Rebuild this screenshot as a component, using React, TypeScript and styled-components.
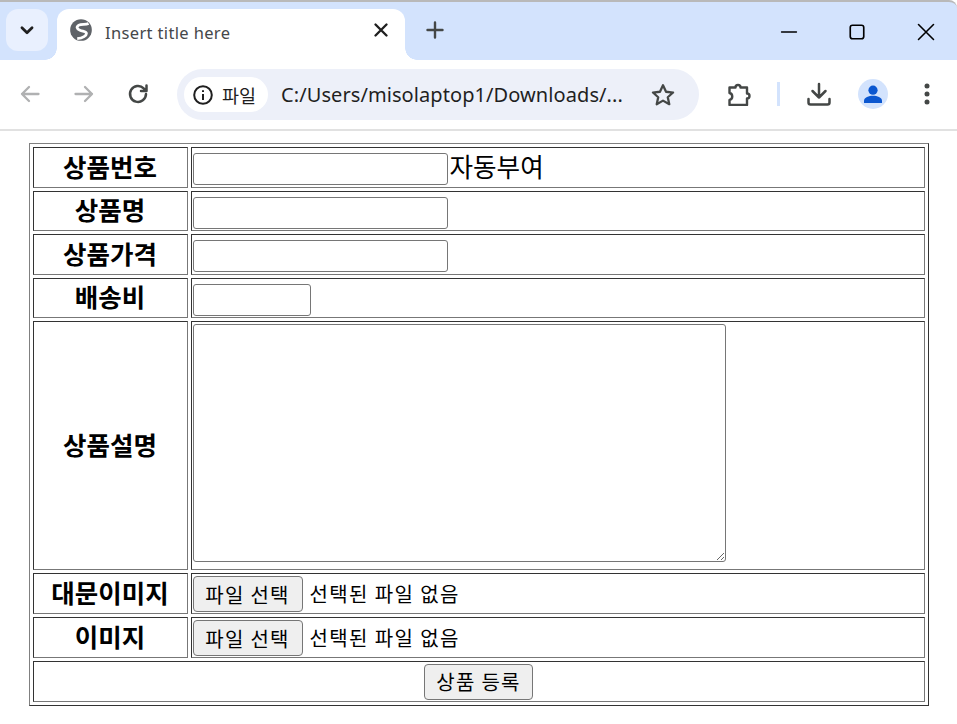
import React from "react";
import styled, { createGlobalStyle } from "styled-components";

const GlobalStyle = createGlobalStyle`
  body {
    margin: 0;
    background: #fff;
    font-family: "Noto Sans CJK KR", "Noto Sans", sans-serif;
  }
`;

const TitleBar = styled.div`
  height: 60px;
  border-top: 2px solid #b9b9b9;
  border-top-right-radius: 8px;
  background: #d3e3fd;
  display: flex;
  align-items: flex-start;
  padding: 7px 0 0 6px;
  box-sizing: border-box;
`;

const TabSearch = styled.div`
  width: 42px;
  height: 42px;
  border-radius: 12px;
  background: #e9f0fe;
  display: flex;
  align-items: center;
  justify-content: center;
`;

const Tab = styled.div`
  position: relative;
  width: 348px;
  height: 51px;
  margin-left: 9px;
  padding: 0 13px 9px 11px;
  box-sizing: border-box;
  background: #fff;
  border-radius: 12px 12px 0 0;
  display: flex;
  align-items: center;
  &::before,
  &::after {
    content: "";
    position: absolute;
    bottom: 0;
    width: 12px;
    height: 12px;
    background: radial-gradient(circle at var(--cx) 0, #d3e3fd 11.5px, #fff 12px);
  }
  &::before {
    left: -12px;
    --cx: 0;
  }
  &::after {
    right: -12px;
    --cx: 100%;
  }
`;

const TabTitle = styled.span`
  flex: 1;
  margin-left: 11px;
  padding-top: 5px;
  font-family: "Noto Sans", sans-serif;
  font-size: 16.5px;
  letter-spacing: 0.35px;
  color: #45474a;
`;

const NewTab = styled.div`
  margin: 9px 0 0 18px;
  display: flex;
`;

const WindowControls = styled.div`
  margin-left: auto;
  display: flex;
  align-items: center;
  height: 42px;
  margin-top: 2px;
  padding-right: 21px;
  gap: 50px;
`;

const Toolbar = styled.div`
  height: 71px;
  box-sizing: border-box;
  background: #fff;
  border-bottom: 2px solid #e1e1e1;
  border-radius: 8px 8px 0 0;
  display: flex;
  align-items: center;
  padding: 0 0 2px 18px;
`;

const NavButtons = styled.div`
  display: flex;
  align-items: center;
  gap: 30px;
`;

const Omnibox = styled.div`
  width: 522px;
  height: 51px;
  margin: 2px 0 0 27px;
  padding: 0 23px 0 7px;
  box-sizing: border-box;
  border-radius: 26px;
  background: #edf0f9;
  display: flex;
  align-items: center;
`;

const Chip = styled.div`
  width: 84px;
  height: 35px;
  flex: none;
  box-sizing: border-box;
  border-radius: 18px;
  background: #fff;
  display: flex;
  align-items: center;
  padding-left: 8px;
  gap: 8px;
  font-size: 18.5px;
  color: #1f1f1f;
`;

const Url = styled.span`
  flex: 1;
  margin-left: 13px;
  font-family: "Noto Sans", sans-serif;
  font-size: 20px;
  letter-spacing: 0.08px;
  color: #1f1f1f;
  white-space: nowrap;
`;

const Actions = styled.div`
  display: flex;
  align-items: center;
  margin-left: 29px;
`;

const Divider = styled.div`
  width: 3px;
  height: 24px;
  margin: 0 27px 0 25px;
  background: #d3e3fd;
`;

const Avatar = styled.div`
  width: 30px;
  height: 30px;
  margin: 0 36px 0 27px;
  border-radius: 50%;
  background: #d3e3fd;
  display: flex;
  align-items: center;
  justify-content: center;
`;

const FormTable = styled.table`
  width: 900px;
  margin: 12px auto 0;
  border: 1px solid #333;
  border-top-color: #808080;
  border-left-color: #808080;
  border-spacing: 3px;
  color: #000;
`;

const Row = styled.tr``;

const HeadCell = styled.td<{ $h: number }>`
  width: 155px;
  height: ${(p) => p.$h}px;
  box-sizing: border-box;
  border: 1px solid #777;
  border-top-color: #333;
  border-left-color: #333;
  padding: 0 0 4px;
  text-align: center;
  font-size: 25.5px;
  line-height: 30px;
  font-weight: 700;
`;

const FieldCell = styled.td<{ $h: number; $top: number }>`
  height: ${(p) => p.$h}px;
  box-sizing: border-box;
  border: 1px solid #777;
  border-top-color: #333;
  border-left-color: #333;
  padding: ${(p) => p.$top}px 0 0 1px;
  vertical-align: top;
  line-height: 1;
`;

const FieldLine = styled.div`
  display: flex;
  align-items: center;
`;

const TextField = styled.input<{ $w: number }>`
  width: ${(p) => p.$w}px;
  height: 32px;
  box-sizing: border-box;
  border: 1px solid #767676;
  border-radius: 3px;
  padding: 0;
  background: #fff;
  flex: none;
`;

const Note = styled.span`
  font-size: 25.6px;
  line-height: 26px;
  margin: 0 0 6px 2px;
`;

const Description = styled.textarea`
  display: block;
  width: 533px;
  height: 238px;
  margin: 0;
  box-sizing: border-box;
  border: 1px solid #767676;
  border-radius: 3px;
  padding: 0;
`;

const GrayButton = styled.button<{ $w: number }>`
  width: ${(p) => p.$w}px;
  height: 36px;
  box-sizing: border-box;
  border: 1px solid #767676;
  border-radius: 4px;
  background: #efefef;
  padding: 0;
  font-family: "Noto Sans CJK KR", sans-serif;
  font-size: 20px;
  letter-spacing: 1.3px;
  color: #000;
  flex: none;
`;

const FileName = styled.span`
  margin-left: 7px;
  font-size: 20px;
  letter-spacing: 1.4px;
`;

const SubmitCell = styled.td`
  height: 41px;
  box-sizing: border-box;
  border: 1px solid #777;
  border-top-color: #333;
  border-left-color: #333;
  padding: 0;
  text-align: center;
  line-height: 0;
`;

const Stroke = ({ size = 24, color = "#444746", width = 2, d }: { size?: number; color?: string; width?: number; d: string }) => (
  <svg width={size} height={size} viewBox="0 0 24 24" fill="none" stroke={color} strokeWidth={width} strokeLinecap="round" strokeLinejoin="round">
    <path d={d} />
  </svg>
);

const Globe = () => (
  <svg width="26" height="26" viewBox="0 0 24 24" fill="none">
    <circle cx="12" cy="12" r="10" fill="#5f6368" />
    <path d="M19 6c-3 1.500-6.500 0-9 1.500S8 11 11 12.200s6 1 6 3-3 4.300-8.500 4.800" stroke="#fff" strokeWidth="2.6" />
  </svg>
);

const Info = () => (
  <svg width="22" height="22" viewBox="0 0 22 22" fill="none">
    <circle cx="11" cy="11" r="8.8" stroke="#1f1f1f" strokeWidth="2" />
    <path d="M11 10v6M11 6.2v1.8" stroke="#1f1f1f" strokeWidth="2" />
  </svg>
);

const Puzzle = () => (
  <svg width="24" height="24" viewBox="0 0 24 24" fill="none" stroke="#444746" strokeWidth="2.4" strokeLinejoin="round">
    <path d="M1.5 5.5h6a2.500 2.500 0 0 1 5 0h6.500v6a2.300 2.300 0 0 1 0 5v6.500H1.500V18a3.600 3.600 0 0 0 0-7z" />
  </svg>
);

const Person = () => (
  <svg width="20" height="20" viewBox="0 0 20 20" fill="#0b57d0">
    <circle cx="10" cy="6.2" r="4.6" />
    <path d="M1 19v-2.4C1 13.6 6 11.8 10 11.8s9 1.8 9 4.8V19z" />
  </svg>
);

const Kebab = () => (
  <svg width="6" height="22" viewBox="0 0 6 22" fill="#444746">
    <circle cx="3" cy="3" r="2.5" />
    <circle cx="3" cy="11" r="2.5" />
    <circle cx="3" cy="19" r="2.5" />
  </svg>
);

const App = () => {
  return (
    <>
      <GlobalStyle />
      <TitleBar>
        <TabSearch>
          <Stroke size={22} color="#1f1f1f" width={3} d="M6.5 9.5 12 15l5.5-5.5" />
        </TabSearch>
        <Tab>
          <Globe />
          <TabTitle>Insert title here</TabTitle>
          <Stroke size={22} color="#1f1f1f" width={2.6} d="M6 6l12 12M18 6 6 18" />
        </Tab>
        <NewTab>
          <Stroke size={24} color="#444746" width={2.4} d="M12 4.5v15M4.5 12h15" />
        </NewTab>
        <WindowControls>
          <Stroke size={18} color="#000" width={1.7} d="M2 12h20" />
          <Stroke size={18} color="#000" width={2.2} d="M6 3h12a3 3 0 0 1 3 3v12a3 3 0 0 1-3 3H6a3 3 0 0 1-3-3V6a3 3 0 0 1 3-3z" />
          <Stroke size={20} color="#000" width={1.9} d="M3 3l18 18M21 3 3 21" />
        </WindowControls>
      </TitleBar>
      <Toolbar>
        <NavButtons>
          <Stroke size={24} color="#b0b1b2" width={2.3} d="M20.5 12H4M11 5l-7 7 7 7" />
          <Stroke size={24} color="#b0b1b2" width={2.3} d="M3.5 12H20M13 5l7 7-7 7" />
          <Stroke size={24} color="#444746" width={2.5} d="M20 12a8 8 0 1 1-2.3-5.7L20 8.5M20.5 3.5v5.5H15" />
        </NavButtons>
        <Omnibox>
          <Chip>
            <Info />
            파일
          </Chip>
          <Url>C:/Users/misolaptop1/Downloads/...</Url>
          <Stroke size={26} color="#444746" width={2.1} d="M12 3l2.8 6 6.5.7-4.9 4.4 1.4 6.4L12 17.2l-5.8 3.3 1.4-6.4-4.9-4.4 6.5-.7z" />
        </Omnibox>
        <Actions>
          <Puzzle />
          <Divider />
          <Stroke size={24} color="#444746" width={2.5} d="M12 2v13.5M5.500 9l6.500 6.500L18.500 9M1.500 17v3.500a2 2 0 0 0 2 2h17a2 2 0 0 0 2-2V17" />
          <Avatar>
            <Person />
          </Avatar>
          <Kebab />
        </Actions>
      </Toolbar>
      <FormTable>
        <tbody>
          <Row>
            <HeadCell $h={41}>상품번호</HeadCell>
            <FieldCell $h={41} $top={5}>
              <FieldLine>
                <TextField $w={255} />
                <Note>자동부여</Note>
              </FieldLine>
            </FieldCell>
          </Row>
          <Row>
            <HeadCell $h={40}>상품명</HeadCell>
            <FieldCell $h={40} $top={5}>
              <FieldLine>
                <TextField $w={255} />
              </FieldLine>
            </FieldCell>
          </Row>
          <Row>
            <HeadCell $h={41}>상품가격</HeadCell>
            <FieldCell $h={41} $top={5}>
              <FieldLine>
                <TextField $w={255} />
              </FieldLine>
            </FieldCell>
          </Row>
          <Row>
            <HeadCell $h={40}>배송비</HeadCell>
            <FieldCell $h={40} $top={5}>
              <FieldLine>
                <TextField $w={118} />
              </FieldLine>
            </FieldCell>
          </Row>
          <Row>
            <HeadCell $h={249}>상품설명</HeadCell>
            <FieldCell $h={249} $top={2}>
              <Description />
            </FieldCell>
          </Row>
          <Row>
            <HeadCell $h={41}>대문이미지</HeadCell>
            <FieldCell $h={41} $top={2}>
              <FieldLine>
                <GrayButton $w={110}>파일 선택</GrayButton>
                <FileName>선택된 파일 없음</FileName>
              </FieldLine>
            </FieldCell>
          </Row>
          <Row>
            <HeadCell $h={41}>이미지</HeadCell>
            <FieldCell $h={41} $top={2}>
              <FieldLine>
                <GrayButton $w={110}>파일 선택</GrayButton>
                <FileName>선택된 파일 없음</FileName>
              </FieldLine>
            </FieldCell>
          </Row>
          <Row>
            <SubmitCell colSpan={2}>
              <GrayButton $w={109}>상품 등록</GrayButton>
            </SubmitCell>
          </Row>
        </tbody>
      </FormTable>
    </>
  );
};

export default App;
